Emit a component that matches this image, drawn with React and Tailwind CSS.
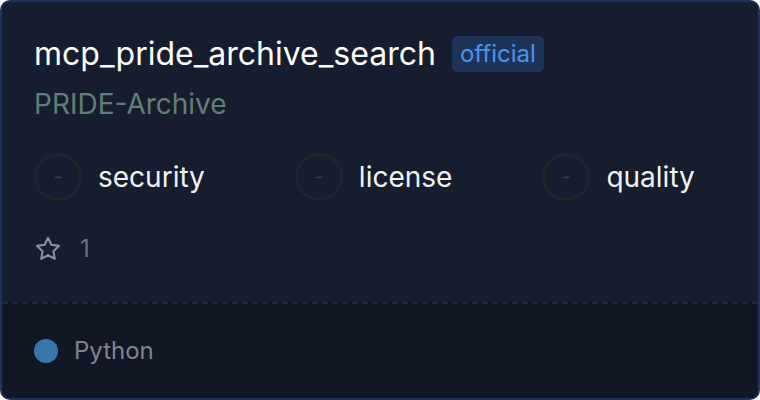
import React from 'react';

const scores = ['security', 'license', 'quality'];

const ScoreItem = ({ label }) => (
    <div className="flex items-center gap-4">
        <div className="w-12 h-12 rounded-full border-[3px] border-[#1c2528] flex items-center justify-center">
            <span className="text-[18px] text-[#3b4250] leading-none">-</span>
        </div>
        <span className="text-[28px] text-[#f1f2f4] leading-none">{label}</span>
    </div>
);

const StarIcon = () => (
    <svg width="28" height="28" viewBox="0 0 24 24" fill="none" stroke="#8a8f98" strokeWidth="1.8" strokeLinejoin="round">
        <path d="M12 2.5l2.9 5.9 6.5.95-4.7 4.6 1.1 6.45L12 17.35l-5.8 3.05 1.1-6.45-4.7-4.6 6.5-.95z" />
    </svg>
);

const App = () => {
    return (
        <div className="w-[760px] h-[400px] bg-white" style={{ fontFamily: 'Inter, "Noto Sans", sans-serif' }}>
            <div className="w-full h-full rounded-[10px] border-2 border-[#1e3358] bg-[#151d2e] overflow-hidden flex flex-col">
                <div className="px-8 pt-[32px] flex-1">
                    <div className="flex items-center gap-4">
                        <h1 className="text-[32px] text-white leading-[40px]">mcp_pride_archive_search</h1>
                        <span className="rounded-[5px] bg-[#1e3358] text-[#4b93ee] text-[24px] leading-[36px] px-2">official</span>
                    </div>
                    <p className="mt-[12px] text-[28px] text-[#607f76] leading-[36px]">PRIDE-Archive</p>
                    <div className="mt-[31px] flex items-center gap-[90px]">
                        {scores.map((s) => (
                            <ScoreItem key={s} label={s} />
                        ))}
                    </div>
                    <div className="mt-[34px] flex items-center gap-[18px]">
                        <StarIcon />
                        <span className="text-[24px] text-[#6b7280] leading-none">1</span>
                    </div>
                </div>
                <div className="h-[96px] border-t-2 border-dashed border-[#222a30] bg-[#111725] px-8 flex items-center gap-4">
                    <span className="w-6 h-6 rounded-full bg-[#3776ab]" />
                    <span className="text-[24px] text-[#80858d]">Python</span>
                </div>
            </div>
        </div>
    );
};

export default App;
